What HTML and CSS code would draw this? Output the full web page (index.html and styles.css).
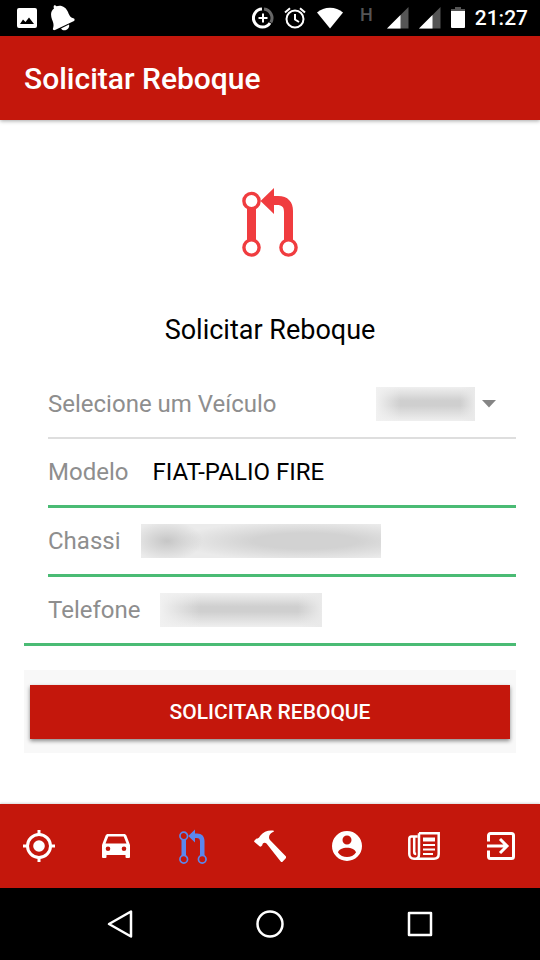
FILE: index.html
```html
<!DOCTYPE html>
<html lang="pt-BR">
<head>
<meta charset="utf-8">
<meta name="viewport" content="width=device-width, initial-scale=1">
<title>Solicitar Reboque</title>
<link rel="stylesheet" href="styles.css">
</head>
<body>
<svg class="symbols" width="0" height="0" aria-hidden="true">
  <symbol id="pull" viewBox="0 0 56 70">
    <g fill="none" stroke="currentColor" stroke-width="3.4">
      <circle cx="9.5" cy="14" r="7.6"/><circle cx="9.5" cy="60.5" r="7.6"/><circle cx="46.5" cy="60.5" r="7.6"/>
    </g>
    <path fill="currentColor" d="M5 21h9v32H5zM18.500 14 32 1v8h4c10 0 15 6 15 15v29h-9V25c0-5-2-7-7-7h-3v9z"/>
  </symbol>
</svg>
<div class="screen">
  <div class="status">
    <div class="status-group notices">
      <svg width="20" height="20" viewBox="0 0 20 20"><path fill="#fff" fill-rule="evenodd" d="M2 0h16a2 2 0 0 1 2 2v16a2 2 0 0 1-2 2H2a2 2 0 0 1-2-2V2a2 2 0 0 1 2-2zM3 16h14l-5-6.500-3.500 4.500L6 11.500z"/></svg>
      <svg width="25" height="26" viewBox="0 0 25 26"><path fill="#fff" d="M4 .5c1-.8 2 .2 2.500.8C11-.5 16 2 18 7c1.500 4 2.500 5.500 6 6.500.8.500.8 2 0 2.500L5 25c-1.500.5-2.500-.5-2-1.500C4 20 3.500 18 2 14.500.5 10 .5 6 4 3.500 3.500 2.500 3.500 1.500 4 .5zM11 23.500l8-4c1.500 5-5.500 8-8 4z"/></svg>
    </div>
    <div class="status-group">
      <svg width="22" height="22" viewBox="0 0 22 22" fill="none"><path stroke="#666" stroke-width="3" d="M12 2.100A9 9 0 0 1 18.800 15.500"/><path stroke="#fff" stroke-width="3" d="M10 2.100A9 9 0 1 0 18 16"/><path stroke="#fff" stroke-width="2" d="M11 6.500v9M6.500 11h9"/></svg>
      <svg width="22" height="22" viewBox="0 0 22 22" fill="none" stroke="#fff" stroke-width="2"><circle cx="11" cy="12" r="8.500"/><path d="M11 7v5.500l4 2.500M1 5.500 6 1.200M21 5.500l-5-4.300"/></svg>
      <svg width="28" height="22" viewBox="0 0 28 22"><path fill="#fff" d="M1 5.500C8-1 20-1 27 5.500L14 21.500z"/></svg>
      <span class="net">H</span>
      <svg width="22" height="22" viewBox="0 0 22 22"><path fill="#555" d="M21.500 0v21.500H0z"/><path fill="#fff" d="M13.500 8v13.500H0z"/></svg>
      <svg width="22" height="22" viewBox="0 0 22 22"><path fill="#555" d="M21.500 0v21.500H0z"/><path fill="#fff" d="M13.500 8v13.500H0z"/></svg>
      <svg width="14" height="22" viewBox="0 0 14 22"><path fill="#555" d="M4 0h6v2h4v4H0V2h4z"/><path fill="#fff" d="M0 4h14v16a1 1 0 0 1-1 1H1a1 1 0 0 1-1-1z"/></svg>
      <time class="clock">21:27</time>
    </div>
  </div>

  <header class="toolbar"><h1>Solicitar Reboque</h1></header>

  <main class="content">
    <svg class="hero" aria-hidden="true"><use href="#pull"/></svg>
    <h2>Solicitar Reboque</h2>
    <form>
      <div class="row vehicle">
        <label for="veiculo">Selecione um Veículo</label>
        <select id="veiculo" class="masked"><option></option></select>
        <svg class="caret" viewBox="0 0 14 8" aria-hidden="true"><path fill="#858585" d="M0 0h14L7 7.500z"/></svg>
      </div>
      <div class="row"><label for="modelo">Modelo</label><input id="modelo" type="text" value="FIAT-PALIO FIRE"></div>
      <div class="row"><label for="chassi">Chassi</label><input id="chassi" class="masked chassis" type="text"></div>
      <div class="row last"><label for="telefone">Telefone</label><input id="telefone" class="masked phone" type="tel"></div>
      <div class="actions"><button type="submit">SOLICITAR REBOQUE</button></div>
    </form>
  </main>

  <nav class="tabs">
    <a href="#local" aria-label="Localização"><svg width="32" height="32" viewBox="0 0 32 32"><circle cx="16" cy="16" r="5.800" fill="#fff"/><circle cx="16" cy="16" r="11.500" fill="none" stroke="#fff" stroke-width="3"/><path stroke="#fff" stroke-width="3" d="M16 0v5M16 27v5M0 16h5M27 16h5"/></svg></a>
    <a href="#carro" aria-label="Veículos"><svg width="28" height="24" viewBox="0 0 28 24"><path fill="#fff" fill-rule="evenodd" d="M6 0h16c1.200 0 2 .6 2.400 1.600L28 11v12a1 1 0 0 1-1 1h-2.500a1 1 0 0 1-1-1v-2h-19v2a1 1 0 0 1-1 1H1a1 1 0 0 1-1-1V11l3.600-9.400C4 .6 4.800 0 6 0zM6.300 2.500 3.500 9.500h21l-2.800-7zM6 12.500a2.300 2.300 0 1 0 0 4.600 2.300 2.300 0 0 0 0-4.600zM22 12.500a2.300 2.300 0 1 0 0 4.600 2.300 2.300 0 0 0 0-4.600z"/></svg></a>
    <a href="#reboque" class="active" aria-label="Reboque" aria-current="page"><svg width="28" height="35"><use href="#pull"/></svg></a>
    <a href="#servicos" aria-label="Serviços"><svg width="32" height="32" viewBox="0 0 32 32"><path fill="#fff" d="M6.500 5.500C9 2 14 0 18.500.5c1.800.2 1.800 1 .5 1.600C16.500 3.500 15 5 15 7.500c0 1 .5 2 1.200 2.800L32 26.500c.4.500.4 1 0 1.500l-3.500 3.700c-.6.500-1.200.5-1.800-.1L12.500 13.500c-1.300-1-3-.8-4 .5.2 1-.5 1.800-1.200 2.300-.8.500-1.300.4-1.800-.1L.5 12c-.5-.5-.5-1 0-1.600L2 9c.5-.4 1-.4 1.700-.4C4.700 8 5.500 7 6.500 5.500z"/></svg></a>
    <a href="#perfil" aria-label="Perfil"><svg width="30" height="30" viewBox="0 0 30 30"><path fill="#fff" fill-rule="evenodd" d="M15 0a15 15 0 1 0 0 30 15 15 0 0 0 0-30zM15 4.500a4.500 4.500 0 1 1 0 9 4.500 4.500 0 0 1 0-9zM6 21.500c1-6.500 17-6.500 18 0-4 6-14 6-18 0z"/></svg></a>
    <a href="#noticias" aria-label="Notícias"><svg width="32" height="28" viewBox="0 0 32 28" fill="none" stroke="#fff" stroke-width="2.500"><path d="M11 1.300h19.700V22c0 3-1.700 4.700-4.700 4.700H6c-3 0-4.700-1.700-4.700-4.700V7c0-1.500.8-2.500 2.200-2.500H9.700"/><path d="M11 1.300V22c0 3-1 4.700-3 4.700M6.200 5v15c0 1.500 1 2 2 2"/><path stroke-width="2" d="M15 13h12M15 17.500h12M15 22h10"/><path stroke-width="4" d="M15 7.500h12"/></svg></a>
    <a href="#sair" aria-label="Sair"><svg width="28" height="28" viewBox="0 0 28 28" fill="none" stroke="#fff" stroke-width="3"><path stroke-linejoin="round" d="M1.500 9.500v-6a2 2 0 0 1 2-2h21a2 2 0 0 1 2 2v21a2 2 0 0 1-2 2h-21a2 2 0 0 1-2-2v-6"/><path d="M0 14h19M13 7l7 7-7 7"/></svg></a>
  </nav>

  <div class="system">
    <button type="button" aria-label="Voltar"><svg width="30" height="30" viewBox="0 0 30 30"><path d="M26 2.500v25L4 15z"/></svg></button>
    <button type="button" aria-label="Início"><svg width="30" height="30" viewBox="0 0 30 30"><circle cx="15" cy="15" r="12.500"/></svg></button>
    <button type="button" aria-label="Recentes"><svg width="30" height="30" viewBox="0 0 30 30"><path d="M4 4h22v22H4z"/></svg></button>
  </div>
</div>
</body>
</html>
```
FILE: styles.css
```css
* { box-sizing: border-box; }
body {
  margin: 0;
  background: #fff;
  color: #000;
  font-family: Roboto, "Liberation Sans", sans-serif;
  font-size: 24px;
}
svg { display: block; flex: none; }
h1, h2 { margin: 0; }
.symbols { position: absolute; }
.screen { min-height: 100vh; display: flex; flex-direction: column; }

.status {
  display: flex;
  align-items: center;
  justify-content: space-between;
  height: 36px;
  padding: 0 12px 0 17px;
  background: #000;
  color: #fff;
}
.status-group { display: flex; align-items: center; gap: 10px; }
.notices { gap: 13px; }
.net {
  align-self: flex-start;
  padding: 0 4px 0 6px;
  color: #555;
  font-size: 18px;
  font-weight: 500;
  line-height: 18px;
}
.clock { font-size: 21px; font-weight: 500; line-height: 24px; }

.toolbar {
  display: flex;
  align-items: center;
  height: 84px;
  padding: 0 24px;
  background: #c4170c;
  box-shadow: 0 1px 4px rgba(0, 0, 0, .35);
  color: #fff;
}
.toolbar h1 { font-size: 30px; font-weight: 500; }

.content { flex: 1; padding: 67px 24px 0; }
.hero { width: 56px; height: 70px; margin: 0 auto; color: #f03c3f; }
.content h2 {
  margin: 56px 0 23px;
  font-size: 27px;
  font-weight: 400;
  line-height: 34px;
  text-align: center;
}

.row {
  display: flex;
  align-items: center;
  gap: 20px;
  height: 69px;
  margin-left: 24px;
  border-bottom: 3px solid #4abb74;
}
.row.vehicle { gap: 7px; padding-right: 20px; border-bottom: 2px solid #dedede; }
.row.last { margin-left: 0; padding-left: 24px; }
.row label { color: #8e8e8e; }
.row input, .row select {
  height: 34px;
  padding: 0 4px;
  border: 0;
  border-radius: 0;
  background: transparent;
  color: #000;
  font: inherit;
  appearance: none;
  outline: 0;
}
.row input { flex: 1; min-width: 0; }
.row .masked {
  background:
    linear-gradient(90deg, #f1f1f1, transparent 25%, transparent 85%, #eaeaea),
    linear-gradient(#efefef, #cfcfcf 40%, #cfcfcf 55%, #efefef);
}
.row select.masked { width: 99px; margin-left: auto; }
.row .chassis {
  flex: 0 1 240px;
  background:
    radial-gradient(36px 20px at 26px 50%, #c6c6c6, transparent),
    radial-gradient(130px 20px at 165px 50%, #d2d2d2 40%, transparent),
    #ebebeb;
}
.row .phone { flex: 0 1 162px; }
.caret { width: 14px; height: 8px; }

.actions { margin-top: 24px; padding: 15px 6px 14px; background: #f8f8f8; }
.actions button {
  display: block;
  width: 100%;
  height: 54px;
  border: 0;
  background: #c4170c;
  box-shadow: 0 2px 4px rgba(0, 0, 0, .45);
  color: #fff;
  font: 500 21px/24px Roboto, "Liberation Sans", sans-serif;
}

.tabs { display: flex; height: 84px; background: #c4170c; box-shadow: 0 -1px 2px rgba(0, 0, 0, .15); }
.tabs a { flex: 1; display: flex; align-items: center; justify-content: center; }
.tabs .active { color: #5b87ee; }

.system {
  display: flex;
  justify-content: center;
  gap: 120px;
  height: 72px;
  background: #000;
}
.system button { padding: 0; border: 0; background: none; }
.system svg { fill: none; stroke: #fff; stroke-width: 2.5; stroke-linejoin: round; }
```
